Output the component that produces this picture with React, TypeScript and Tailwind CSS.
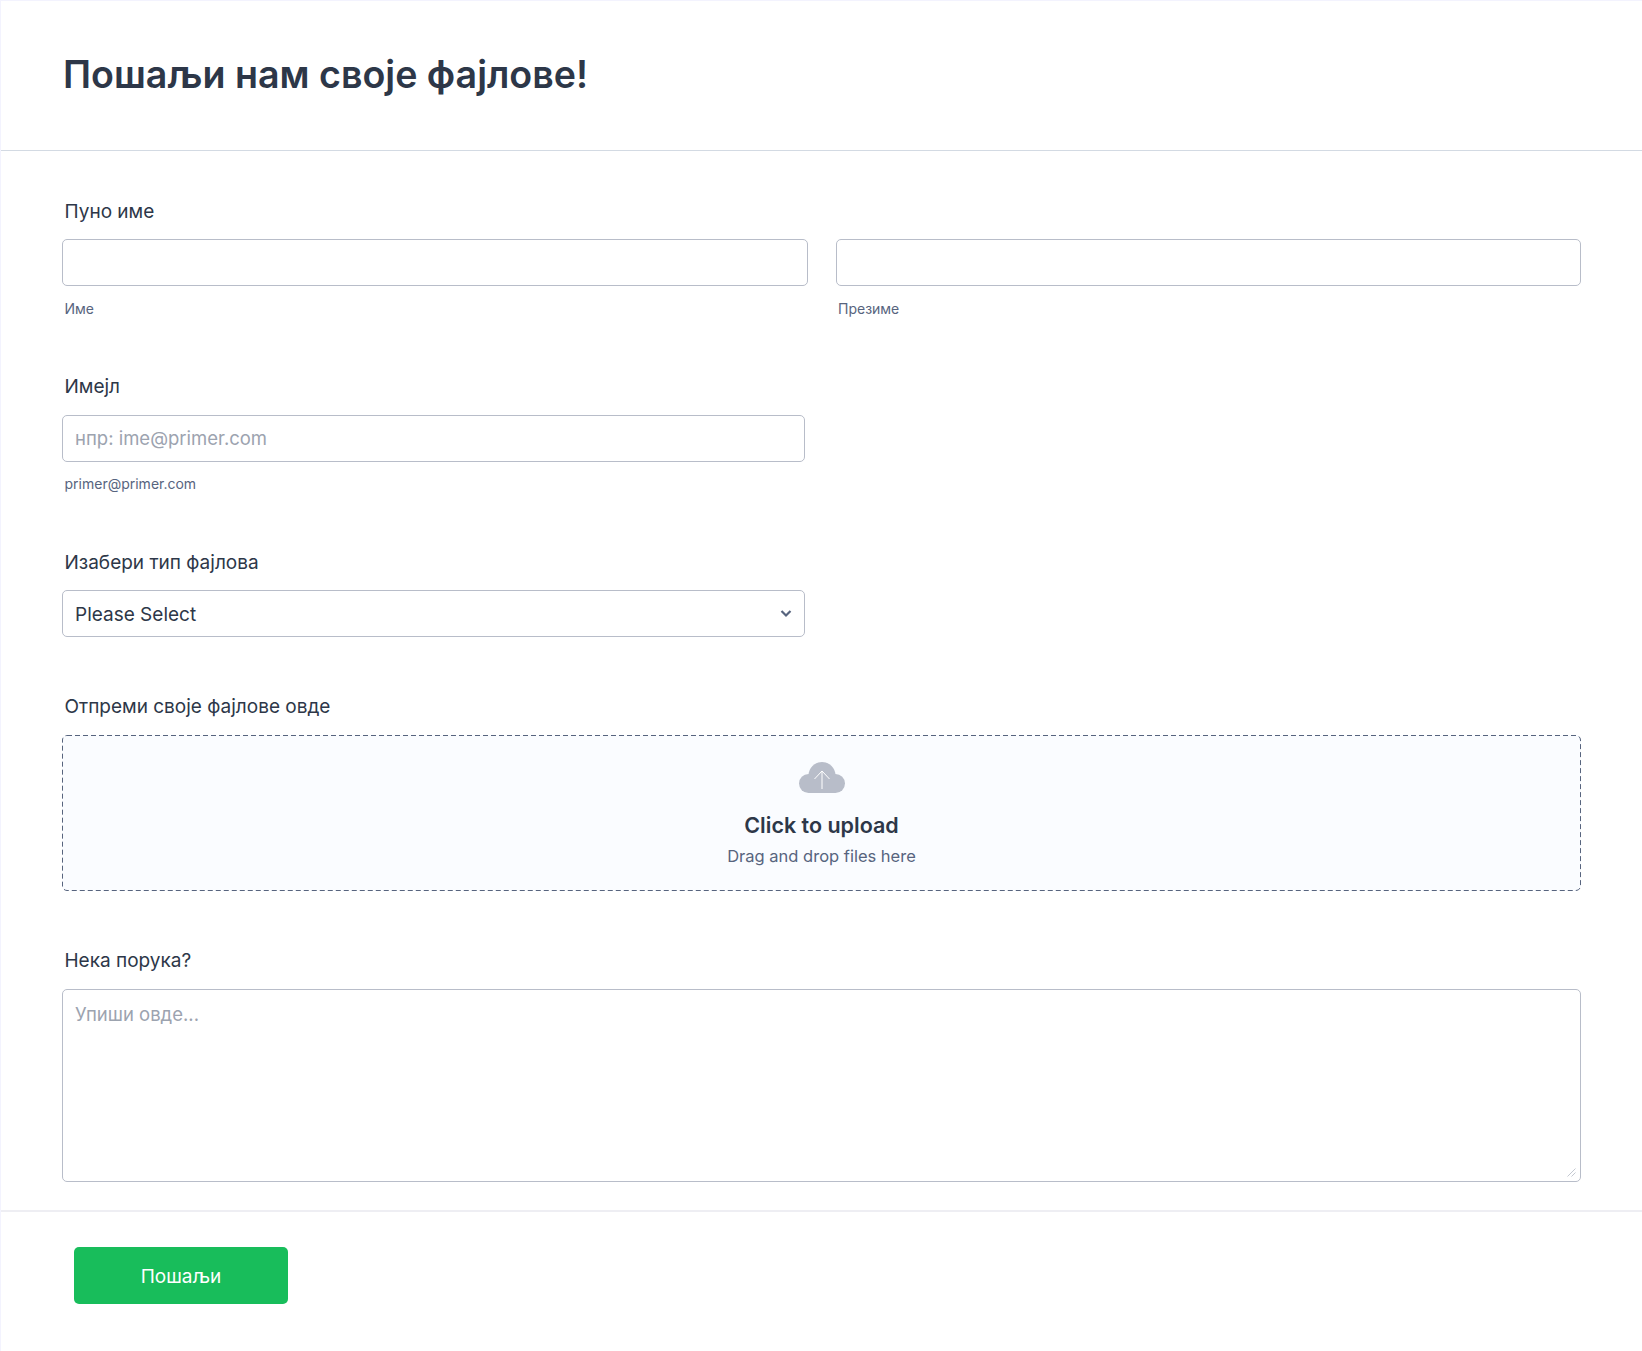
import React from 'react';

const fieldClass =
  'block w-full h-[47px] px-[12px] bg-white border border-[#b8bdc9] rounded-[5px] text-[#2d3748] placeholder:text-[#9ca3af] outline-none';

function Label({ children, className = '' }: { children: React.ReactNode; className?: string }) {
  return <label className={`block pl-[2.5px] h-6 leading-6 text-[19px] font-normal text-[#2d3748] ${className}`}>{children}</label>;
}

function Sublabel({ children, className = 'mt-3' }: { children: React.ReactNode; className?: string }) {
  return <div className={`pl-[2.5px] h-5 leading-5 text-[14px] text-[#57647e] ${className}`}>{children}</div>;
}

export default function App() {
  return (
    <div className="min-h-[1351px] bg-white border-l border-t border-[#f3f3fe] text-[#2d3748] font-['Inter',sans-serif]">
      {/* Header */}
      <div className="h-[150px] flex items-center pl-[62px] pb-[1px] border-b border-[#d3dae3]">
        <h1 className="text-[37.6px] font-semibold text-[#2d3748]">Пошаљи нам своје фајлове!</h1>
      </div>

      <form className="pt-[49px] pl-[61px] pr-[61px]">
        {/* Full name */}
        <Label className="mb-[15px]">Пуно име</Label>
        <div className="grid grid-cols-2 gap-[28px]">
          <div>
            <input className={`${fieldClass} text-[18.5px]`} />
            <Sublabel className="mt-[13px]">Име</Sublabel>
          </div>
          <div>
            <input className={`${fieldClass} text-[18.5px]`} />
            <Sublabel className="mt-[13px]">Презиме</Sublabel>
          </div>
        </div>

        {/* Email */}
        <Label className="mt-[56px] mb-4">Имејл</Label>
        <div className="w-[743px]">
          <input className={`${fieldClass} pb-[2px] text-[18.5px]`} placeholder="нпр: ime@primer.com" />
          <Sublabel>primer@primer.com</Sublabel>
        </div>

        {/* File type */}
        <Label className="mt-[57px] mb-[15px]">Изабери тип фајлова</Label>
        <div className="relative w-[743px]">
          <select className={`${fieldClass} pt-[4px] text-[19px] appearance-none`}>
            <option>Please Select</option>
          </select>
          <svg className="absolute right-[12px] top-[16px] pointer-events-none" width="14" height="14" viewBox="0 0 14 14" fill="none">
            <path d="M2.5 5l4.5 4.5L11.5 5" stroke="#57647e" strokeWidth="2.200" />
          </svg>
        </div>

        {/* Upload */}
        <Label className="mt-[58px] mb-4">Отпреми своје фајлове овде</Label>
        <div className="relative h-[156px] flex flex-col items-center bg-[#fafcff] rounded-[5px]">
          {/* dashed outline with longer dashes than the css border gives */}
          <svg className="absolute inset-0 w-full h-full pointer-events-none" fill="none">
            <rect x="0.5" y="0.5" rx="4.500" className="w-[calc(100%-1px)] h-[calc(100%-1px)]" stroke="#57647e" strokeDasharray="5 3" />
          </svg>
          <svg className="mt-[27px]" width="46" height="32" viewBox="0 0 46 32">
            <g fill="#b8bdc9">
              <circle cx="23" cy="13.500" r="13.500" />
              <circle cx="9.500" cy="21.500" r="9.500" />
              <circle cx="36.500" cy="21.500" r="9.500" />
              <rect x="9.500" y="15" width="27" height="16" />
            </g>
            <path d="M23 27V9M15.500 17l7.500-8 7.500 8" stroke="#ffffff" strokeWidth="1" fill="none" />
          </svg>
          <div className="mt-[17px] h-7 leading-7 text-[21.500px] font-semibold text-[#2d3748]">Click to upload</div>
          <div className="mt-[5px] h-6 leading-6 text-[16.500px] text-[#57647e]">Drag and drop files here</div>
        </div>

        {/* Message */}
        <Label className="mt-[58px] mb-4">Нека порука?</Label>
        <div className="relative">
          <textarea
            className="block w-full h-[193px] px-[12px] py-[12px] bg-white border border-[#b8bdc9] rounded-[5px] text-[18.500px] leading-6 text-[#2d3748] placeholder:text-[#9ca3af] outline-none resize-none"
            placeholder="Упиши овде..."
          />
          <svg className="absolute right-[5px] bottom-[5px]" width="9" height="9" viewBox="0 0 9 9" fill="none">
            <path d="M0.500 8.500L8.500 0.500M4.500 8.500L8.500 4.500" stroke="#c3c8d1" />
          </svg>
        </div>
      </form>

      {/* Footer */}
      <div className="mt-[28px] pt-[35px] pl-[73px] border-t-2 border-[#eeeef3]">
        <button type="button" className="w-[214px] h-[57px] pt-[3px] bg-[#18bd5b] rounded-[5px] text-[19px] text-white">
          Пошаљи
        </button>
      </div>
    </div>
  );
}
